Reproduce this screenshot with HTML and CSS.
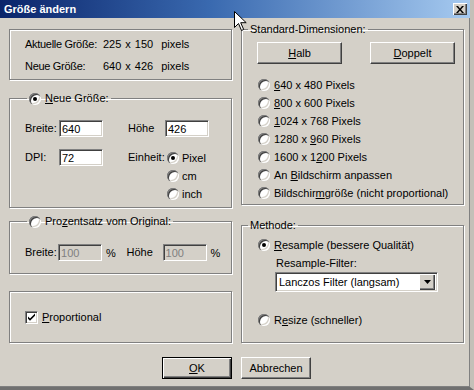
FILE: index.html
```html
<!DOCTYPE html>
<html lang="de">
<head>
    <meta charset="UTF-8">
    <title>Größe ändern</title>
    <link rel="stylesheet" href="styles.css">
</head>
<body>
    <div class="dialog">
        <div class="titlebar">
            <span class="title">Größe ändern</span>
            <span class="close">
                <svg width="8" height="7" viewBox="0 0 8 7"><path d="M0 0h2l2 2.5L6 0h2L5 3.5 8 7H6L4 4.5 2 7H0l3-3.5z" fill="#000"/></svg>
            </span>
        </div>

        <div class="content">
            <div class="columns">
                <div class="col">
                    <div class="group info">
                        <div class="info-grid">
                            <span class="info-lbl">Aktuelle Größe:</span><span>225</span><span>x</span><span>150</span><span class="unit">pixels</span>
                            <span class="info-lbl">Neue Größe:</span><span>640</span><span>x</span><span>426</span><span class="unit">pixels</span>
                        </div>
                    </div>

                    <fieldset class="group new-size">
                        <legend class="legend-radio"><span class="radio checked"></span><span><u>N</u>eue Größe:</span></legend>
                        <div class="form">
                            <div class="row">
                                <label class="lbl">Breite:</label>
                                <input class="field" type="text" value="640">
                                <label class="lbl lbl-right">Höhe</label>
                                <input class="field" type="text" value="426">
                            </div>
                            <div class="row top">
                                <label class="lbl">DPI:</label>
                                <input class="field" type="text" value="72">
                                <label class="lbl lbl-right unit-lbl">Einheit:</label>
                                <div class="units">
                                    <div class="option"><span class="radio checked"></span>Pixel</div>
                                    <div class="option"><span class="radio"></span>cm</div>
                                    <div class="option"><span class="radio"></span>inch</div>
                                </div>
                            </div>
                        </div>
                    </fieldset>

                    <fieldset class="group percent">
                        <legend class="legend-radio"><span class="radio"></span><span>Pro<u>z</u>entsatz vom Original:</span></legend>
                        <div class="form">
                            <div class="row">
                                <label class="lbl">Breite:</label>
                                <input class="field" type="text" value="100" disabled>
                                <span class="pct">%</span>
                                <label class="lbl lbl-right">Höhe</label>
                                <input class="field" type="text" value="100" disabled>
                                <span class="pct">%</span>
                            </div>
                        </div>
                    </fieldset>

                    <div class="group proportional">
                        <span class="check">
                            <svg width="9" height="9" viewBox="0 0 9 9"><path d="M1 3.5l2 2L8 0.5v2.3L3 7.8 1 5.8z" fill="#000"/></svg>
                        </span>
                        <span><u>P</u>roportional</span>
                    </div>
                </div>

                <div class="col">
                    <fieldset class="group presets">
                        <legend>Standard-Dimensionen:</legend>
                        <div class="preset-buttons">
                            <button class="btn wide"><u>H</u>alb</button>
                            <button class="btn wide"><u>D</u>oppelt</button>
                        </div>
                        <div class="preset-list">
                            <div class="option"><span class="radio"></span><span><u>6</u>40 x 480 Pixels</span></div>
                            <div class="option"><span class="radio"></span><span><u>8</u>00 x 600 Pixels</span></div>
                            <div class="option"><span class="radio"></span><span><u>1</u>024 x 768 Pixels</span></div>
                            <div class="option"><span class="radio"></span><span>1280 x <u>9</u>60 Pixels</span></div>
                            <div class="option"><span class="radio"></span><span>1600 x 1<u>2</u>00 Pixels</span></div>
                            <div class="option"><span class="radio"></span><span>An <u>B</u>ildschirm anpassen</span></div>
                            <div class="option"><span class="radio"></span><span>Bildschir<u>m</u>größe (nicht proportional)</span></div>
                        </div>
                    </fieldset>

                    <fieldset class="group method">
                        <legend>Methode:</legend>
                        <div class="method-body">
                            <div class="option"><span class="radio checked"></span><span><u>R</u>esample (bessere Qualität)</span></div>
                            <div class="filter-label">Resample-Filter:</div>
                            <div class="select">
                                <span class="select-text">Lanczos Filter (langsam)</span>
                                <span class="select-arrow">
                                    <svg width="7" height="4" viewBox="0 0 7 4"><path d="M0 0h7L3.5 4z" fill="#000"/></svg>
                                </span>
                            </div>
                            <div class="option resize"><span class="radio"></span><span>R<u>e</u>size (schneller)</span></div>
                        </div>
                    </fieldset>
                </div>
            </div>

            <div class="actions">
                <button class="btn default"><u>O</u>K</button>
                <button class="btn">Abbrechen</button>
            </div>
        </div>

        <!-- mouse pointer in the screenshot -->
        <svg class="cursor" width="13" height="21" viewBox="0 0 13 21">
            <path d="M0.5 0.5v16l4-4 3 7 2.2-1-3-6.8h5.5z" fill="#fff" stroke="#000" stroke-width="1"/>
        </svg>
    </div>
</body>
</html>
```

FILE: styles.css
```css
* {
    box-sizing: border-box;
}

body {
    margin: 0;
    background-color: #d4d0c8;
    font-family: "Liberation Sans", Arial, sans-serif;
    font-size: 11px;
    color: #000;
}

.dialog {
    position: relative;
    width: 474px;
    height: 390px;
    background-color: #d4d0c8;
    border-right: 4px solid #c4c0b8;
    border-bottom: 3px solid #707070;
    box-shadow: inset -1px -1px 0 #808080;
}

/* Title bar */
.titlebar {
    height: 18px;
    background: linear-gradient(to right, #0a246a, #3a6ab0 45%, #a6caf0);
    display: flex;
    align-items: center;
    justify-content: space-between;
    padding: 0 3px 0 4px;
}

.title {
    color: #fff;
    font-weight: bold;
    font-size: 11px;
}

.close {
    width: 14px;
    height: 12px;
    background-color: #d4d0c8;
    box-shadow: inset 1px 1px 0 #fff, inset -1px -1px 0 #404040, inset -2px -2px 0 #808080;
    display: flex;
    align-items: center;
    justify-content: center;
}

.content {
    padding: 5px 0 0 9px;
}

.columns {
    display: flex;
    gap: 9px;
}

.col {
    width: 223px;
    display: flex;
    flex-direction: column;
}

/* Group boxes */
.group {
    margin: 0;
    padding: 0;
    border: 1px solid #808080;
    box-shadow: 1px 1px 0 #fff, inset 1px 1px 0 #fff;
    min-width: 0;
}

legend {
    margin-left: 6px;
    padding: 0 2px;
    line-height: 13px;
    height: 13px;
}

.legend-radio {
    margin-left: 17px;
    display: flex;
    align-items: center;
    gap: 4px;
}

.info {
    margin-top: 6px;
    height: 51px;
    padding: 8px 0 0 15px;
}

.info-grid {
    display: grid;
    grid-template-columns: 74px auto auto auto 1fr;
    column-gap: 4px;
    row-gap: 9px;
    line-height: 13px;
    white-space: nowrap;
}

.info-lbl {
    letter-spacing: -0.3px;
}

.unit {
    padding-left: 4px;
}

.new-size {
    margin-top: 12px;
    height: 116px;
}

.percent {
    margin-top: 7px;
    height: 59px;
}

.proportional {
    margin-top: 17px;
    height: 52px;
    display: flex;
    align-items: center;
    gap: 4px;
    padding-left: 15px;
}

.form {
    padding: 15px 0 0 15px;
}

.percent .form {
    padding-top: 16px;
}

.row {
    display: flex;
    align-items: center;
    height: 17px;
}

.row.top {
    align-items: flex-start;
    margin-top: 12px;
}

.lbl {
    width: 34px;
    line-height: 17px;
}

.lbl-right {
    width: 37px;
    margin-left: 25px;
}

.unit-lbl {
    width: 39px;
}

.pct {
    width: 25px;
    padding-left: 4px;
}

.pct + .lbl-right {
    margin-left: 0;
}

.field {
    width: 44px;
    height: 17px;
    margin: 0;
    padding: 0 2px;
    font: inherit;
    color: #000;
    background-color: #fff;
    border: 1px solid;
    border-color: #808080 #fff #fff #808080;
    box-shadow: inset 1px 1px 0 #404040, inset -1px -1px 0 #d4d0c8;
    outline: none;
}

.field:disabled {
    color: #808080;
    background-color: #d4d0c8;
}

.units {
    display: flex;
    flex-direction: column;
    gap: 1px;
}

.units .option {
    height: 17px;
    gap: 3px;
}

/* Radio buttons and check box */
.option {
    display: flex;
    align-items: center;
    gap: 4px;
    height: 18px;
}

.radio {
    position: relative;
    flex: none;
    width: 12px;
    height: 12px;
    border-radius: 50%;
    background-color: #fff;
    box-shadow: inset 1px 1px 0 #808080, inset 2px 2px 0 #404040, inset -1px -1px 0 #fff, inset -2px -2px 0 #d4d0c8;
}

.radio.checked::after {
    content: "";
    position: absolute;
    left: 4px;
    top: 4px;
    width: 4px;
    height: 4px;
    border-radius: 50%;
    background-color: #000;
}

.check {
    flex: none;
    width: 13px;
    height: 13px;
    background-color: #fff;
    border: 1px solid;
    border-color: #808080 #fff #fff #808080;
    box-shadow: inset 1px 1px 0 #404040, inset -1px -1px 0 #d4d0c8;
    display: flex;
    align-items: center;
    justify-content: center;
}

/* Buttons */
.btn {
    height: 22px;
    width: 70px;
    margin: 0;
    padding: 0;
    font: inherit;
    color: #000;
    background-color: #d4d0c8;
    border: 1px solid;
    border-color: #fff #404040 #404040 #fff;
    box-shadow: inset -1px -1px 0 #808080;
    cursor: pointer;
}

.btn.default {
    border-color: #000;
    box-shadow: inset 1px 1px 0 #fff, inset -1px -1px 0 #404040, inset -2px -2px 0 #808080;
}

.btn.wide {
    width: 85px;
}

.presets {
    height: 182px;
}

.preset-buttons {
    display: flex;
    gap: 28px;
    padding: 6px 0 0 15px;
}

.preset-list {
    padding: 12px 0 0 16px;
}

.method {
    margin-top: 14px;
    height: 124px;
}

.method-body {
    padding: 6px 0 0 16px;
}

.method-body .option {
    height: 14px;
}

.filter-label {
    margin: 5px 0 0 18px;
    line-height: 13px;
}

.select {
    margin: 2px 0 0 17px;
    width: 163px;
    height: 20px;
    display: flex;
    align-items: center;
    justify-content: space-between;
    background-color: #fff;
    border: 1px solid;
    border-color: #808080 #fff #fff #808080;
    box-shadow: inset 1px 1px 0 #404040, inset -1px -1px 0 #d4d0c8;
    padding: 2px 2px 2px 3px;
}

.select-arrow {
    width: 16px;
    height: 16px;
    background-color: #d4d0c8;
    box-shadow: inset 1px 1px 0 #fff, inset -1px -1px 0 #404040, inset -2px -2px 0 #808080;
    display: flex;
    align-items: center;
    justify-content: center;
}

.method-body .resize {
    margin-top: 21px;
}

.actions {
    display: flex;
    justify-content: center;
    gap: 9px;
    margin-top: 14px;
    padding-right: 6px;
}

.cursor {
    position: absolute;
    left: 234px;
    top: 11px;
}
```
